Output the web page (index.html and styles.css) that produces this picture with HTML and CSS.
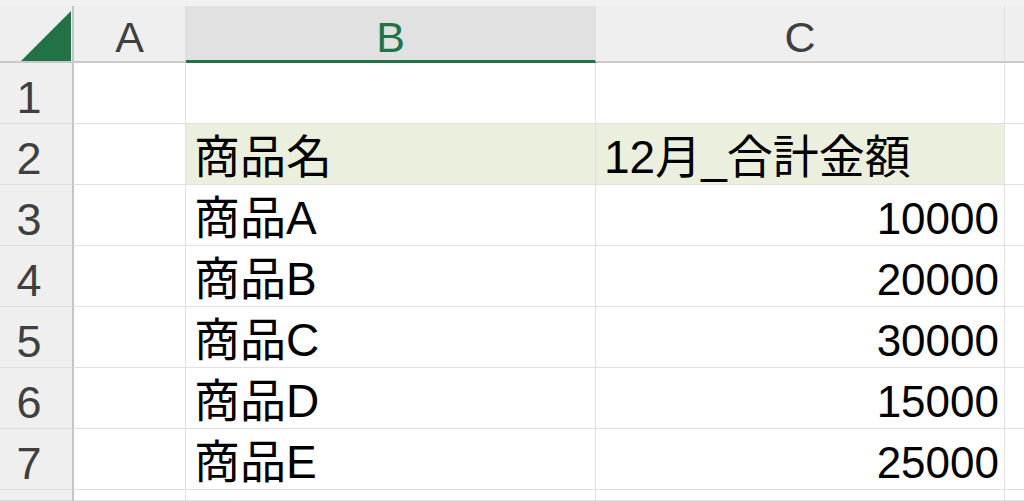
FILE: index.html
```html
<!DOCTYPE html>
<html lang="ja">
<head>
<meta charset="utf-8">
<title>Sheet</title>
<link rel="stylesheet" href="styles.css">
</head>
<body>
<div class="sheet">
  <div class="top-strip"></div>

  <div class="corner">
    <svg class="corner-tri" width="50" height="50" viewBox="0 0 50 50"><polygon points="50,0 50,50 0,50" fill="#217346"/></svg>
  </div>
  <div class="col-head">A</div>
  <div class="col-head selected">B</div>
  <div class="col-head">C</div>
  <div class="col-head last"></div>

  <div class="row-head">1</div>
  <div class="cell"></div>
  <div class="cell"></div>
  <div class="cell"></div>
  <div class="cell last"></div>

  <div class="row-head">2</div>
  <div class="cell"></div>
  <div class="cell text fill">商品名</div>
  <div class="cell text fill">12月_合計金額</div>
  <div class="cell last"></div>

  <div class="row-head">3</div>
  <div class="cell"></div>
  <div class="cell text">商品A</div>
  <div class="cell num">10000</div>
  <div class="cell last"></div>

  <div class="row-head">4</div>
  <div class="cell"></div>
  <div class="cell text">商品B</div>
  <div class="cell num">20000</div>
  <div class="cell last"></div>

  <div class="row-head">5</div>
  <div class="cell"></div>
  <div class="cell text">商品C</div>
  <div class="cell num">30000</div>
  <div class="cell last"></div>

  <div class="row-head">6</div>
  <div class="cell"></div>
  <div class="cell text">商品D</div>
  <div class="cell num">15000</div>
  <div class="cell last"></div>

  <div class="row-head">7</div>
  <div class="cell"></div>
  <div class="cell text">商品E</div>
  <div class="cell num">25000</div>
  <div class="cell last"></div>

  <div class="row-head"></div>
  <div class="cell"></div>
  <div class="cell"></div>
  <div class="cell"></div>
  <div class="cell last"></div>
</div>
</body>
</html>
```

FILE: styles.css
```css
html, body {
  margin: 0;
  padding: 0;
  background: #ffffff;
  overflow: hidden;
}

.sheet {
  width: 1024px;
  height: 501px;
  display: grid;
  grid-template-columns: 74px 112px 410px 409px 1fr;
  grid-template-rows: 6px 57px repeat(7, 61px) 1fr;
  font-family: "Liberation Sans", "Noto Sans CJK JP", sans-serif;
  font-size: 45px;
  line-height: 45px;
  color: #000000;
}

.top-strip {
  grid-column: 1 / -1;
  background: #f1f1f1;
}

.corner {
  box-sizing: border-box;
  background: #efefef;
  border-right: 2px solid #c4c4c4;
  border-bottom: 2px solid #c9c9c9;
  display: flex;
  justify-content: flex-end;
  align-items: flex-end;
  padding: 0 1px 0 0;
}

.corner-tri {
  display: block;
}

.col-head {
  box-sizing: border-box;
  background: #efefef;
  border-right: 1px solid #dedede;
  border-bottom: 2px solid #c9c9c9;
  display: flex;
  justify-content: center;
  align-items: flex-end;
  padding-bottom: 2px;
  color: #3f3f3f;
  font-size: 43px;
  line-height: 43px;
}

.col-head.selected {
  background: #e1e1e1;
  color: #217346;
  border-bottom: 3px solid #217346;
  padding-bottom: 1px;
}

.col-head.last {
  border-right: none;
}

.row-head {
  box-sizing: border-box;
  background: #efefef;
  border-right: 2px solid #c4c4c4;
  border-bottom: 1px solid #dcdcdc;
  display: flex;
  justify-content: center;
  align-items: flex-end;
  padding: 0 14px 3px 0;
  color: #3f3f3f;
  font-size: 45px;
  line-height: 45px;
}

.cell {
  box-sizing: border-box;
  border-right: 1px solid #e1e1e1;
  border-bottom: 1px solid #e1e1e1;
  display: flex;
  align-items: flex-end;
  padding-bottom: 4px;
  white-space: nowrap;
}

.cell.last {
  border-right: none;
}

.cell.fill {
  background: #ebefde;
}

.cell.text {
  justify-content: flex-start;
  padding-left: 8px;
  font-size: 46px;
  line-height: 46px;
}

.cell.num {
  justify-content: flex-end;
  padding-right: 5px;
  font-size: 44px;
  line-height: 44px;
}
```
